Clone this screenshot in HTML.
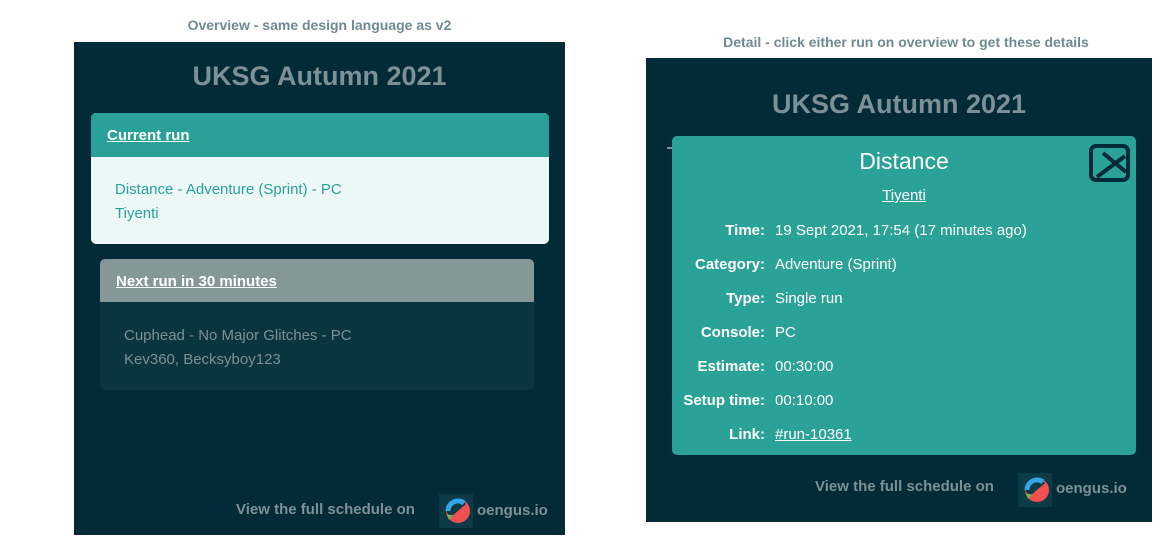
<!DOCTYPE html>
<html><head><meta charset="utf-8"><style>
body{margin:0;width:1166px;height:549px;background:#fff;font-family:"Liberation Sans",sans-serif;position:relative;overflow:hidden}
.cap{position:absolute;color:#6f8a93;font-weight:bold;font-size:14px;text-align:center}
.panel{position:absolute;background:#022a37}
.title{position:absolute;left:0;right:0;text-align:center;color:#7c9196;font-size:27px;font-weight:bold}
.card{position:absolute;border-radius:5px;overflow:hidden}
.hd{height:44px;line-height:46px;padding-left:16px;font-weight:bold;font-size:15px;color:#fff;text-decoration:underline}
.bd{padding:20px 24px;font-size:15px;line-height:24px}
.foot{position:absolute;color:#7c9196;font-weight:bold;font-size:15px}
.logo{position:absolute;width:34px;height:34px;background:#0c3a47}
.ot{position:absolute;color:#7c9196;font-weight:bold;font-size:15px}
.row{position:absolute;left:0;width:464px;font-size:15px;color:#fff}
.row b{position:absolute;right:371px;text-align:right;white-space:nowrap}
.row span{position:absolute;left:103px}
</style></head><body>
<div class="cap" style="left:74px;width:491px;top:17px">Overview - same design language as v2</div>
<div class="cap" style="left:646px;width:520px;top:34px">Detail - click either run on overview to get these details</div>

<div class="panel" style="left:74px;top:42px;width:491px;height:493px">
 <div class="title" style="top:19px">UKSG Autumn 2021</div>
 <div class="card" style="left:17px;top:71px;width:458px;height:131px;background:#ecf8f8">
  <div class="hd" style="background:#2aa198">Current run</div>
  <div class="bd" style="color:#2aa198;padding-top:21px">Distance - Adventure (Sprint) - PC<br>Tiyenti</div>
 </div>
 <div class="card" style="left:26px;top:217px;width:434px;height:131px;background:#0a3440">
  <div class="hd" style="background:#86979a;height:43px;line-height:46px">Next run in 30 minutes</div>
  <div class="bd" style="color:#7c9196;padding-top:22px">Cuphead - No Major Glitches - PC<br>Kev360, Becksyboy123</div>
 </div>
 <div class="foot" style="left:162px;top:459px">View the full schedule on</div>
 <div class="logo" style="left:365px;top:452px"><svg width="34" height="34"><circle cx="19" cy="17" r="12" fill="#f05050"/><path d="M8 19 A11 11 0 0 1 27 10 L12 23 Z" fill="#0c3a47"/><path d="M9 17 A10 10 0 0 1 25 9" stroke="#34a4e8" stroke-width="5" fill="none"/><path d="M8 21 L14 21 L10 26Z" fill="#5bc24b"/></svg></div>
 <div class="ot" style="left:403px;top:460px">oengus.io</div>
</div>

<div class="panel" style="left:646px;top:58px;width:506px;height:464px">
 <div class="title" style="top:31px">UKSG Autumn 2021</div>
 <div style="position:absolute;left:21px;top:89px;width:10px;height:2px;background:#7c9196"></div>
 <div class="card" style="left:26px;top:78px;width:464px;height:319px;background:#2ba297">
  <div style="position:absolute;left:0;right:0;top:12px;text-align:center;color:#fff;font-size:23px">Distance</div>
  <div style="position:absolute;left:0;right:0;top:51px;text-align:center;color:#fff;font-size:15px;text-decoration:underline">Tiyenti</div>
  <svg style="position:absolute;left:417px;top:8px" width="42" height="40"><rect x="2" y="2" width="37" height="34" rx="5" fill="none" stroke="#022a37" stroke-width="4"/><path d="M14 9 L37 28 M8 33 L36 12" stroke="#022a37" stroke-width="4"/></svg>
  <div class="row" style="top:86px"><b>Time:</b><span>19 Sept 2021, 17:54 (17 minutes ago)</span></div>
  <div class="row" style="top:120px"><b>Category:</b><span>Adventure (Sprint)</span></div>
  <div class="row" style="top:154px"><b>Type:</b><span>Single run</span></div>
  <div class="row" style="top:188px"><b>Console:</b><span>PC</span></div>
  <div class="row" style="top:222px"><b>Estimate:</b><span>00:30:00</span></div>
  <div class="row" style="top:256px"><b>Setup time:</b><span>00:10:00</span></div>
  <div class="row" style="top:290px"><b>Link:</b><span style="text-decoration:underline">#run-10361</span></div>
 </div>
 <div class="foot" style="left:169px;top:420px">View the full schedule on</div>
 <div class="logo" style="left:372px;top:415px"><svg width="34" height="34"><circle cx="19" cy="17" r="12" fill="#f05050"/><path d="M8 19 A11 11 0 0 1 27 10 L12 23 Z" fill="#0c3a47"/><path d="M9 17 A10 10 0 0 1 25 9" stroke="#34a4e8" stroke-width="5" fill="none"/><path d="M8 21 L14 21 L10 26Z" fill="#5bc24b"/></svg></div>
 <div class="ot" style="left:410px;top:422px">oengus.io</div>
</div>
</body></html>
